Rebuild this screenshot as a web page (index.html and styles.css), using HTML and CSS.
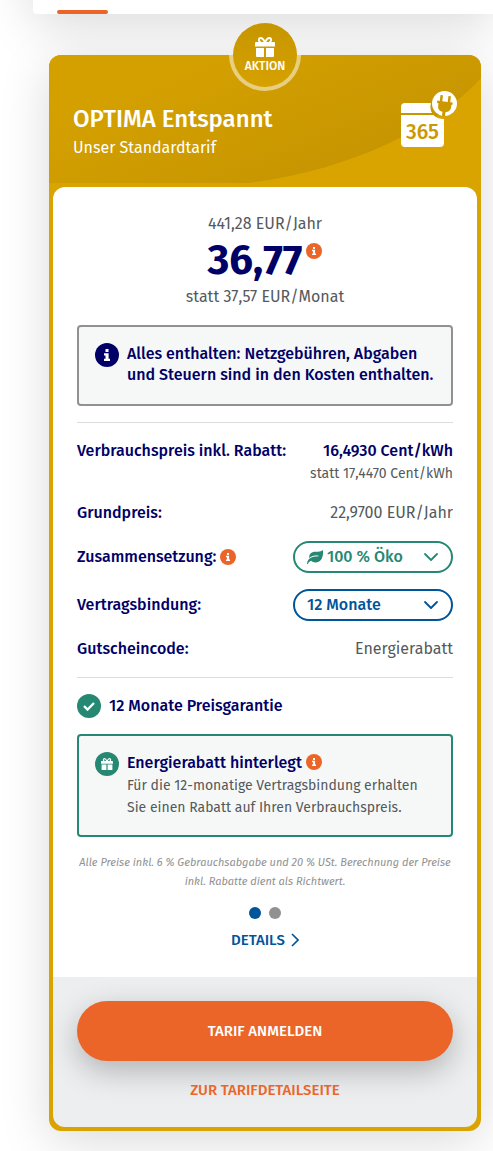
FILE: index.html
```html
<!DOCTYPE html>
<html lang="de">
<head>
    <meta charset="UTF-8">
    <meta name="viewport" content="width=device-width, initial-scale=1.0">
    <title>OPTIMA Entspannt</title>
    <link rel="stylesheet" href="styles.css">
</head>
<body>
    <svg class="sprite" aria-hidden="true">
        <symbol id="i-info" viewBox="0 0 24 24">
            <circle cx="12" cy="12" r="12" fill="currentColor"/>
            <path fill="#fff" d="M10.500 6h3v3h-3zM9 10.300h4.600v5.500H15V18H9v-2.200h1.500v-3.300H9z"/>
        </symbol>
        <symbol id="i-gift" viewBox="0 0 20 20">
            <path fill="currentColor" d="M1 5h18a1 1 0 0 1 1 1v3.500H0V6a1 1 0 0 1 1-1zM1 11h8v9H2a1 1 0 0 1-1-1zM11 11h8v8a1 1 0 0 1-1 1h-7z"/>
            <path fill="none" stroke="currentColor" stroke-width="1.800" d="M9.700 5C8.500 2.200 7 1 5.800 1 3.200 1 3.200 5 5.800 5M10.300 5C11.500 2.200 13 1 14.200 1c2.600 0 2.600 4 0 4"/>
        </symbol>
        <symbol id="i-chevron" viewBox="0 0 16 10">
            <path fill="none" stroke="currentColor" stroke-width="1.800" stroke-linecap="round" stroke-linejoin="round" d="M2 2l6 6 6-6"/>
        </symbol>
    </svg>

    <nav class="tabs"><span class="tab-active"></span></nav>

    <main class="card">
        <header class="card-head">
            <svg class="head-curve" viewBox="0 0 432 128" preserveAspectRatio="none" aria-hidden="true">
                <defs>
                    <linearGradient id="gold" gradientUnits="userSpaceOnUse" x1="150" y1="10" x2="235" y2="215">
                        <stop offset="0" stop-color="#d4a000"/>
                        <stop offset="1" stop-color="#c09000"/>
                    </linearGradient>
                </defs>
                <path fill="url(#gold)" d="M0 0H432V23C385 75 300 115 200 128H0z"/>
            </svg>
            <div class="badge">
                <svg class="badge-icon"><use href="#i-gift"/></svg>
                <span>AKTION</span>
            </div>
            <div class="head-text">
                <h1>OPTIMA Entspannt</h1>
                <p>Unser Standardtarif</p>
            </div>
            <svg class="calendar" viewBox="0 0 56 56" role="img" aria-label="365 Tage Strom">
                <path fill="#fff" d="M4 12H30Q28.500 17 31 22H0V16a4 4 0 0 1 4-4zM0 24H32.500Q36 28 43 28V52a4 4 0 0 1-4 4H4a4 4 0 0 1-4-4z"/>
                <circle cx="43.500" cy="12.500" r="12.500" fill="#fff"/>
                <g transform="rotate(7 43.500 12.500)" fill="#cb9800">
                    <path d="M38.500 4.500h2.500v6h5.500v-6H49v6h2.500v2.500H50.500v2.500c0 3.500-2.500 5-5 5.500V25h-3v-4c-3-.5-5-2-5-5.500V13h-1.500v-2.500h2.500z"/>
                </g>
                <text x="21.500" y="48" text-anchor="middle" class="calendar-text">365</text>
            </svg>
        </header>

        <section class="card-body">
            <div class="price">
                <p>441,28 EUR/Jahr</p>
                <p class="price-main">
                    <strong>36,77</strong>
                    <button class="info" type="button" aria-label="Info zum Preis"><svg><use href="#i-info"/></svg></button>
                </p>
                <p>statt 37,57 EUR/Monat</p>
            </div>

            <div class="box">
                <svg class="box-icon"><use href="#i-info"/></svg>
                <p class="box-title">Alles enthalten: Netzgebühren, Abgaben und Steuern sind in den Kosten enthalten.</p>
            </div>

            <div class="rows">
                <div class="row row-top">
                    <span class="label">Verbrauchspreis inkl. Rabatt:</span>
                    <span class="value"><b>16,4930 Cent/kWh</b><small>statt 17,4470 Cent/kWh</small></span>
                </div>
                <div class="row">
                    <span class="label">Grundpreis:</span>
                    <span class="value">22,9700 EUR/Jahr</span>
                </div>
                <div class="row">
                    <span class="label">
                        <label for="mix">Zusammensetzung:</label>
                        <button class="info" type="button" aria-label="Info zur Zusammensetzung"><svg><use href="#i-info"/></svg></button>
                    </span>
                    <div class="select green">
                        <svg class="leaf" viewBox="0 0 16 14" aria-hidden="true">
                            <path fill="currentColor" d="M16 0c.5 7-1.500 12.500-7.500 12.500-1.800 0-3.300-.6-4.300-1.700C2.500 11.500 1.500 12.300 1 14H0C0 10.500 2 8.300 5 7.200c2-.7 4-.7 6.500-.9v-.7C8.500 5.300 5 5.500 2.200 8 1.800 3.500 5 1.800 8.500 1.700 11.500 1.600 14 1.800 16 0z"/>
                        </svg>
                        <select id="mix"><option>100 % Öko</option></select>
                        <svg class="chevron"><use href="#i-chevron"/></svg>
                    </div>
                </div>
                <div class="row">
                    <label class="label" for="term">Vertragsbindung:</label>
                    <div class="select blue">
                        <select id="term"><option>12 Monate</option></select>
                        <svg class="chevron"><use href="#i-chevron"/></svg>
                    </div>
                </div>
                <div class="row">
                    <span class="label">Gutscheincode:</span>
                    <span class="value">Energierabatt</span>
                </div>
            </div>

            <div class="guarantee">
                <svg class="box-icon" viewBox="0 0 24 24" aria-hidden="true">
                    <circle cx="12" cy="12" r="12" fill="currentColor"/>
                    <path fill="none" stroke="#fff" stroke-width="2.300" d="M7 12l3.500 3.500 6.500-6.500"/>
                </svg>
                <span>12 Monate Preisgarantie</span>
            </div>

            <div class="box box-green">
                <span class="round"><svg><use href="#i-gift"/></svg></span>
                <div>
                    <p class="box-title">Energierabatt hinterlegt
                        <button class="info" type="button" aria-label="Info zum Energierabatt"><svg><use href="#i-info"/></svg></button>
                    </p>
                    <p class="box-text">Für die 12-monatige Vertragsbindung erhalten Sie einen Rabatt auf Ihren Verbrauchspreis.</p>
                </div>
            </div>

            <p class="note">Alle Preise inkl. 6 % Gebrauchsabgabe und 20 % USt. Berechnung der Preise inkl. Rabatte dient als Richtwert.</p>

            <div class="dots">
                <button class="dot active" type="button" aria-label="Seite 1"></button>
                <button class="dot" type="button" aria-label="Seite 2"></button>
            </div>
            <a class="details" href="#details">DETAILS
                <svg viewBox="0 0 8 14" aria-hidden="true"><path fill="none" stroke="currentColor" stroke-width="1.600" d="M1 1l6 6-6 6"/></svg>
            </a>
        </section>

        <footer class="card-foot">
            <button class="cta" type="button">TARIF ANMELDEN</button>
            <a class="more" href="#tarif">ZUR TARIFDETAILSEITE</a>
        </footer>
    </main>
</body>
</html>
```

FILE: styles.css
```css
*{
    box-sizing: border-box;
    margin: 0;
}
body{
    background: #fff;
    color: #54595c;
    font-family: "Fira Sans", Roboto, sans-serif;
    font-size: 16px;
    line-height: 24px;
}
button, select{
    font: inherit;
    border: none;
    padding: 0;
    cursor: pointer;
}
a{
    text-decoration: none;
}
svg{
    display: block;
    flex: none;
}
.sprite{
    position: absolute;
    width: 0;
    height: 0;
}
/* only the lower edge of the tab bar is on screen */
.tabs{
    display: flex;
    align-items: flex-end;
    height: 94px;
    margin-top: -80px;
    margin-left: 33px;
    padding-left: 24px;
    background: #fff;
    border-bottom-left-radius: 4px;
    box-shadow: 0 10px 50px rgba(0, 0, 0, 0.15);
}
.tab-active{
    width: 51px;
    height: 4px;
    border-radius: 2px;
    background: #eb6528;
}

/* card */
.card{
    position: relative;
    margin: 41px 12px 20px 49px;
    padding: 0 4px 4px;
    border-radius: 12px;
    background: #d9a400;
    box-shadow: 0 10px 50px rgba(0, 0, 0, 0.15);
}
.card-head{
    display: flex;
    justify-content: space-between;
    height: 132px;
    padding: 36px 20px 0;
}
.head-curve{
    position: absolute;
    top: 0;
    left: 0;
    width: 100%;
    height: 128px;
    border-radius: 12px 12px 0 0;
}
.head-text{
    position: relative;
    padding-top: 11px;
    color: #fff;
}
h1{
    font-size: 24px;
    font-weight: 500;
    line-height: 34px;
}
/* the ring shows only where the badge lies on the card */
.badge{
    position: absolute;
    top: -36px;
    left: 50%;
    display: flex;
    flex-direction: column;
    align-items: center;
    gap: 1px;
    width: 72px;
    height: 72px;
    margin-left: -36px;
    padding-top: 14px;
    border: 4px solid transparent;
    border-radius: 50%;
    background:
        linear-gradient(#c69500, #d6a200) padding-box,
        linear-gradient(transparent 50%, rgba(255, 255, 255, 0.5) 50%) border-box;
    color: #fff;
    font-size: 12px;
    font-weight: 500;
    line-height: 16px;
}
.badge-icon{
    width: 20px;
    height: 20px;
}
.calendar{
    position: relative;
    width: 56px;
    height: 56px;
}
.calendar-text{
    fill: #cb9800;
    font-size: 21px;
    font-weight: 500;
}

.card-body{
    padding: 25px 24px 27px;
    border-radius: 12px 12px 0 0;
    background: #fff;
}
.price{
    text-align: center;
    margin-bottom: 16px;
}
.price-main{
    display: flex;
    justify-content: center;
    gap: 4px;
    line-height: 49px;
    color: #000066;
}
.price-main strong{
    font-size: 42px;
}
.price-main .info{
    margin-top: 7px;
}
.info{
    display: inline-block;
    width: 16px;
    height: 16px;
    background: none;
    color: #eb6528;
    vertical-align: middle;
}
.info svg{
    width: 16px;
    height: 16px;
}

.box{
    display: flex;
    gap: 8px;
    padding: 16px 16px 19px;
    border: 2px solid #919191;
    border-radius: 4px;
    background: #f6f8f8;
    color: #000066;
}
.box-green{
    padding: 16px;
    border-color: #268873;
}
.box-icon{
    width: 24px;
    height: 24px;
}
.box-title{
    font-weight: 500;
    line-height: 21px;
}
.box-title .info{
    vertical-align: -2px;
}
.box-text{
    margin-top: 2px;
    color: #54595c;
    font-size: 14px;
    line-height: 22px;
}
.round{
    display: flex;
    flex: none;
    align-items: center;
    justify-content: center;
    width: 24px;
    height: 24px;
    border-radius: 50%;
    background: #268873;
    color: #fff;
}
.round svg{
    width: 12px;
    height: 12px;
}

.rows{
    display: flex;
    flex-direction: column;
    gap: 16px;
    margin: 16px 0;
    padding: 16px 0;
    border-top: 1px solid #dcdcdc;
    border-bottom: 1px solid #dcdcdc;
}
.row{
    display: flex;
    align-items: center;
    justify-content: space-between;
}
.row-top{
    align-items: flex-start;
}
.label{
    display: flex;
    align-items: center;
    gap: 4px;
    color: #000066;
    font-weight: 500;
}
.value{
    text-align: right;
}
.value b{
    display: block;
    color: #000066;
    font-weight: 500;
}
.value small{
    display: block;
    font-size: 14px;
    line-height: 22px;
}
.select{
    display: flex;
    align-items: center;
    gap: 4px;
    width: 160px;
    height: 32px;
    padding: 0 12px;
    border: 2px solid;
    border-radius: 16px;
}
.select select{
    flex: 1;
    min-width: 0;
    appearance: none;
    background: none;
    color: inherit;
    font-weight: 500;
}
.green{
    color: #268873;
}
.blue{
    color: #00549a;
}
.leaf{
    width: 16px;
    height: 14px;
}
.chevron{
    width: 16px;
    height: 10px;
}

.guarantee{
    display: flex;
    gap: 8px;
    margin-bottom: 16px;
    color: #000066;
    font-weight: 500;
}
.guarantee .box-icon{
    color: #268873;
}
.note{
    margin: 16px 0;
    color: #919191;
    font-size: 11px;
    font-style: italic;
    line-height: 19px;
    text-align: center;
}
.dots{
    display: flex;
    justify-content: center;
    gap: 8px;
    margin-bottom: 11px;
}
.dot{
    width: 12px;
    height: 12px;
    border-radius: 50%;
    background: #919191;
}
.dot.active{
    background: #00549a;
}
.details{
    display: flex;
    align-items: center;
    justify-content: center;
    gap: 6px;
    color: #00549a;
    font-size: 15px;
    font-weight: 500;
    line-height: 20px;
}
.details svg{
    width: 8px;
    height: 14px;
}

.card-foot{
    padding: 24px 24px 25px;
    border-radius: 0 0 12px 12px;
    background: #eceef0;
    font-size: 15px;
    font-weight: 500;
    text-align: center;
}
.cta{
    display: block;
    width: 100%;
    height: 60px;
    margin-bottom: 17px;
    border-radius: 30px;
    background: #eb6528;
    color: #fff;
    box-shadow: 0 10px 30px rgba(0, 0, 0, 0.25);
}
.more{
    color: #eb6528;
}
```
